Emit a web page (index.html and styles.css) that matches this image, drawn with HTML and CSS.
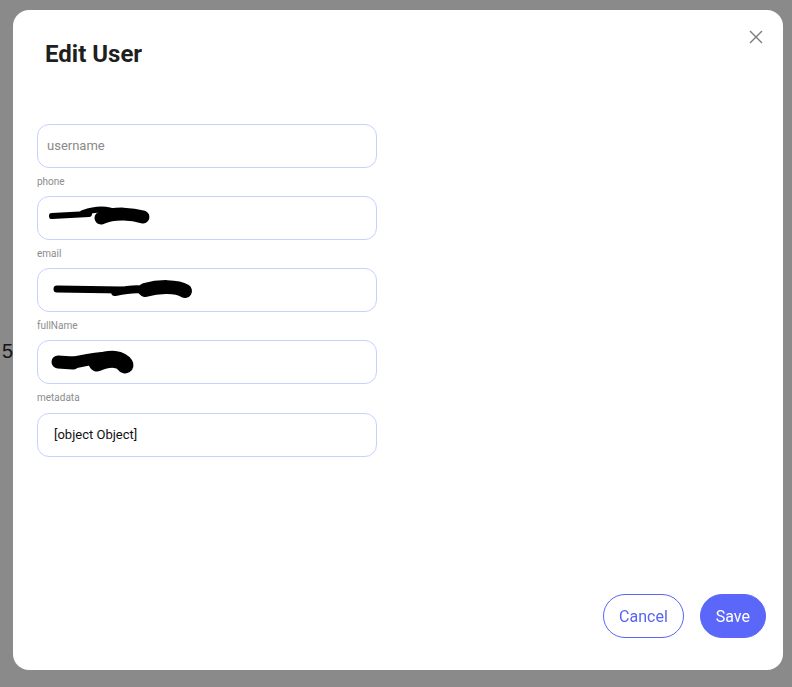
FILE: index.html
```html
<!DOCTYPE html>
<html>
  <head>
    <link rel="stylesheet" href="styles.css">
  </head>
  <body>
    <div id="page">
      <span class="count">5</span>
    </div>

    <div class="backdrop">
      <div class="dialog">
        <button class="close" title="Close">
          <svg viewBox="0 0 14 14" width="14" height="14">
            <path d="M1 1 L13 13 M13 1 L1 13" stroke="#7a7a7a" stroke-width="1.4" fill="none"/>
          </svg>
        </button>

        <h2 class="title">Edit User</h2>

        <form class="userForm">
          <div class="field">
            <input type="text" class="fieldInput plain" placeholder="username">
          </div>

          <div class="field">
            <label>phone</label>
            <div class="masked">
              <input type="text" class="fieldInput">
              <!-- hidden value, scribbled out -->
              <svg class="scribble" viewBox="0 0 340 44">
                <path d="M15 20 L52 18" stroke="#000" stroke-width="6" stroke-linecap="round" fill="none"/>
                <path d="M46 17 C60 12 72 13 80 17" stroke="#000" stroke-width="6" stroke-linecap="round" fill="none"/>
                <path d="M64 22 C78 16 96 18 106 21" stroke="#000" stroke-width="13" stroke-linecap="round" fill="none"/>
              </svg>
            </div>
          </div>

          <div class="field">
            <label>email</label>
            <div class="masked">
              <input type="text" class="fieldInput">
              <svg class="scribble" viewBox="0 0 340 44">
                <path d="M20 21 L85 22" stroke="#000" stroke-width="7" stroke-linecap="round" fill="none"/>
                <path d="M78 24 C92 21 100 20 108 22" stroke="#000" stroke-width="8" stroke-linecap="round" fill="none"/>
                <path d="M108 22 C122 18 140 18 148 23" stroke="#000" stroke-width="14" stroke-linecap="round" fill="none"/>
              </svg>
            </div>
          </div>

          <div class="field">
            <label>fullName</label>
            <div class="masked">
              <input type="text" class="fieldInput">
              <svg class="scribble" viewBox="0 0 340 44">
                <path d="M21 22 L36 23" stroke="#000" stroke-width="13" stroke-linecap="round" fill="none"/>
                <path d="M34 23 C50 20 62 17 74 18" stroke="#000" stroke-width="12" stroke-linecap="round" fill="none"/>
                <path d="M60 23 C74 17 84 19 88 25" stroke="#000" stroke-width="17" stroke-linecap="round" fill="none"/>
              </svg>
            </div>
          </div>

          <div class="field last">
            <label>metadata</label>
            <input type="text" class="fieldInput" value="[object Object]">
          </div>
        </form>

        <div class="actions">
          <button class="btn btnOutline">Cancel</button>
          <button class="btn btnPrimary">Save</button>
        </div>
      </div>
    </div>
  </body>
</html>
```

FILE: styles.css
```css
body {
  margin: 0;
  font-family: 'Roboto', sans-serif;
  background-color: #ffffff;
}

#page {
  padding: 340px 0 0 2px;
}

.count {
  font-family: 'Liberation Sans', sans-serif;
  font-size: 20px;
  color: #2c2c2c;
}

.backdrop {
  position: fixed;
  inset: 0;
  display: flex;
  padding: 10px 9px 17px 13px;
  background-color: rgba(0, 0, 0, 0.46);
}

.dialog {
  flex: 1;
  position: relative;
  display: flex;
  flex-direction: column;
  background-color: #ffffff;
  border-radius: 16px;
}

.close {
  position: absolute;
  top: 20px;
  right: 20px;
  width: 14px;
  height: 14px;
  padding: 0;
  border: none;
  background: none;
  cursor: pointer;
  line-height: 0;
}

.title {
  margin: 30px 0 0 32px;
  font-size: 24px;
  line-height: 28px;
  font-weight: 700;
  color: #1f1f1f;
}

.userForm {
  display: flex;
  flex-direction: column;
  gap: 8px;
  width: 340px;
  margin: 56px 0 0 24px;
}

.field {
  display: flex;
  flex-direction: column;
  gap: 8px;
}

.field.last {
  gap: 9px;
}

.field label {
  font-size: 10px;
  line-height: 12px;
  color: #8c8c8c;
}

.fieldInput {
  box-sizing: border-box;
  width: 340px;
  height: 44px;
  padding: 0 16px 1px;
  border: 1px solid #c7d1ff;
  border-radius: 12px;
  outline: none;
  font-family: 'Roboto', sans-serif;
  font-size: 13px;
  color: #111111;
  background-color: #ffffff;
}

.fieldInput.plain {
  padding: 0 9px 1px;
}

.fieldInput::placeholder {
  color: #8a8a8a;
}

.masked {
  position: relative;
  height: 44px;
}

.scribble {
  position: absolute;
  top: 0;
  left: 0;
  width: 340px;
  height: 44px;
}

.actions {
  margin-top: auto;
  display: flex;
  justify-content: flex-end;
  gap: 16px;
  padding: 0 17px 32px 0;
}

.btn {
  height: 44px;
  padding: 0 15px;
  border-radius: 22px;
  font-family: 'Roboto', sans-serif;
  font-size: 16px;
  cursor: pointer;
}

.btnOutline {
  border: 1px solid #5865f2;
  background-color: #ffffff;
  color: #5865f2;
}

.btnPrimary {
  border: 1px solid #5a67f8;
  background-color: #5a67f8;
  color: #ffffff;
}
```
